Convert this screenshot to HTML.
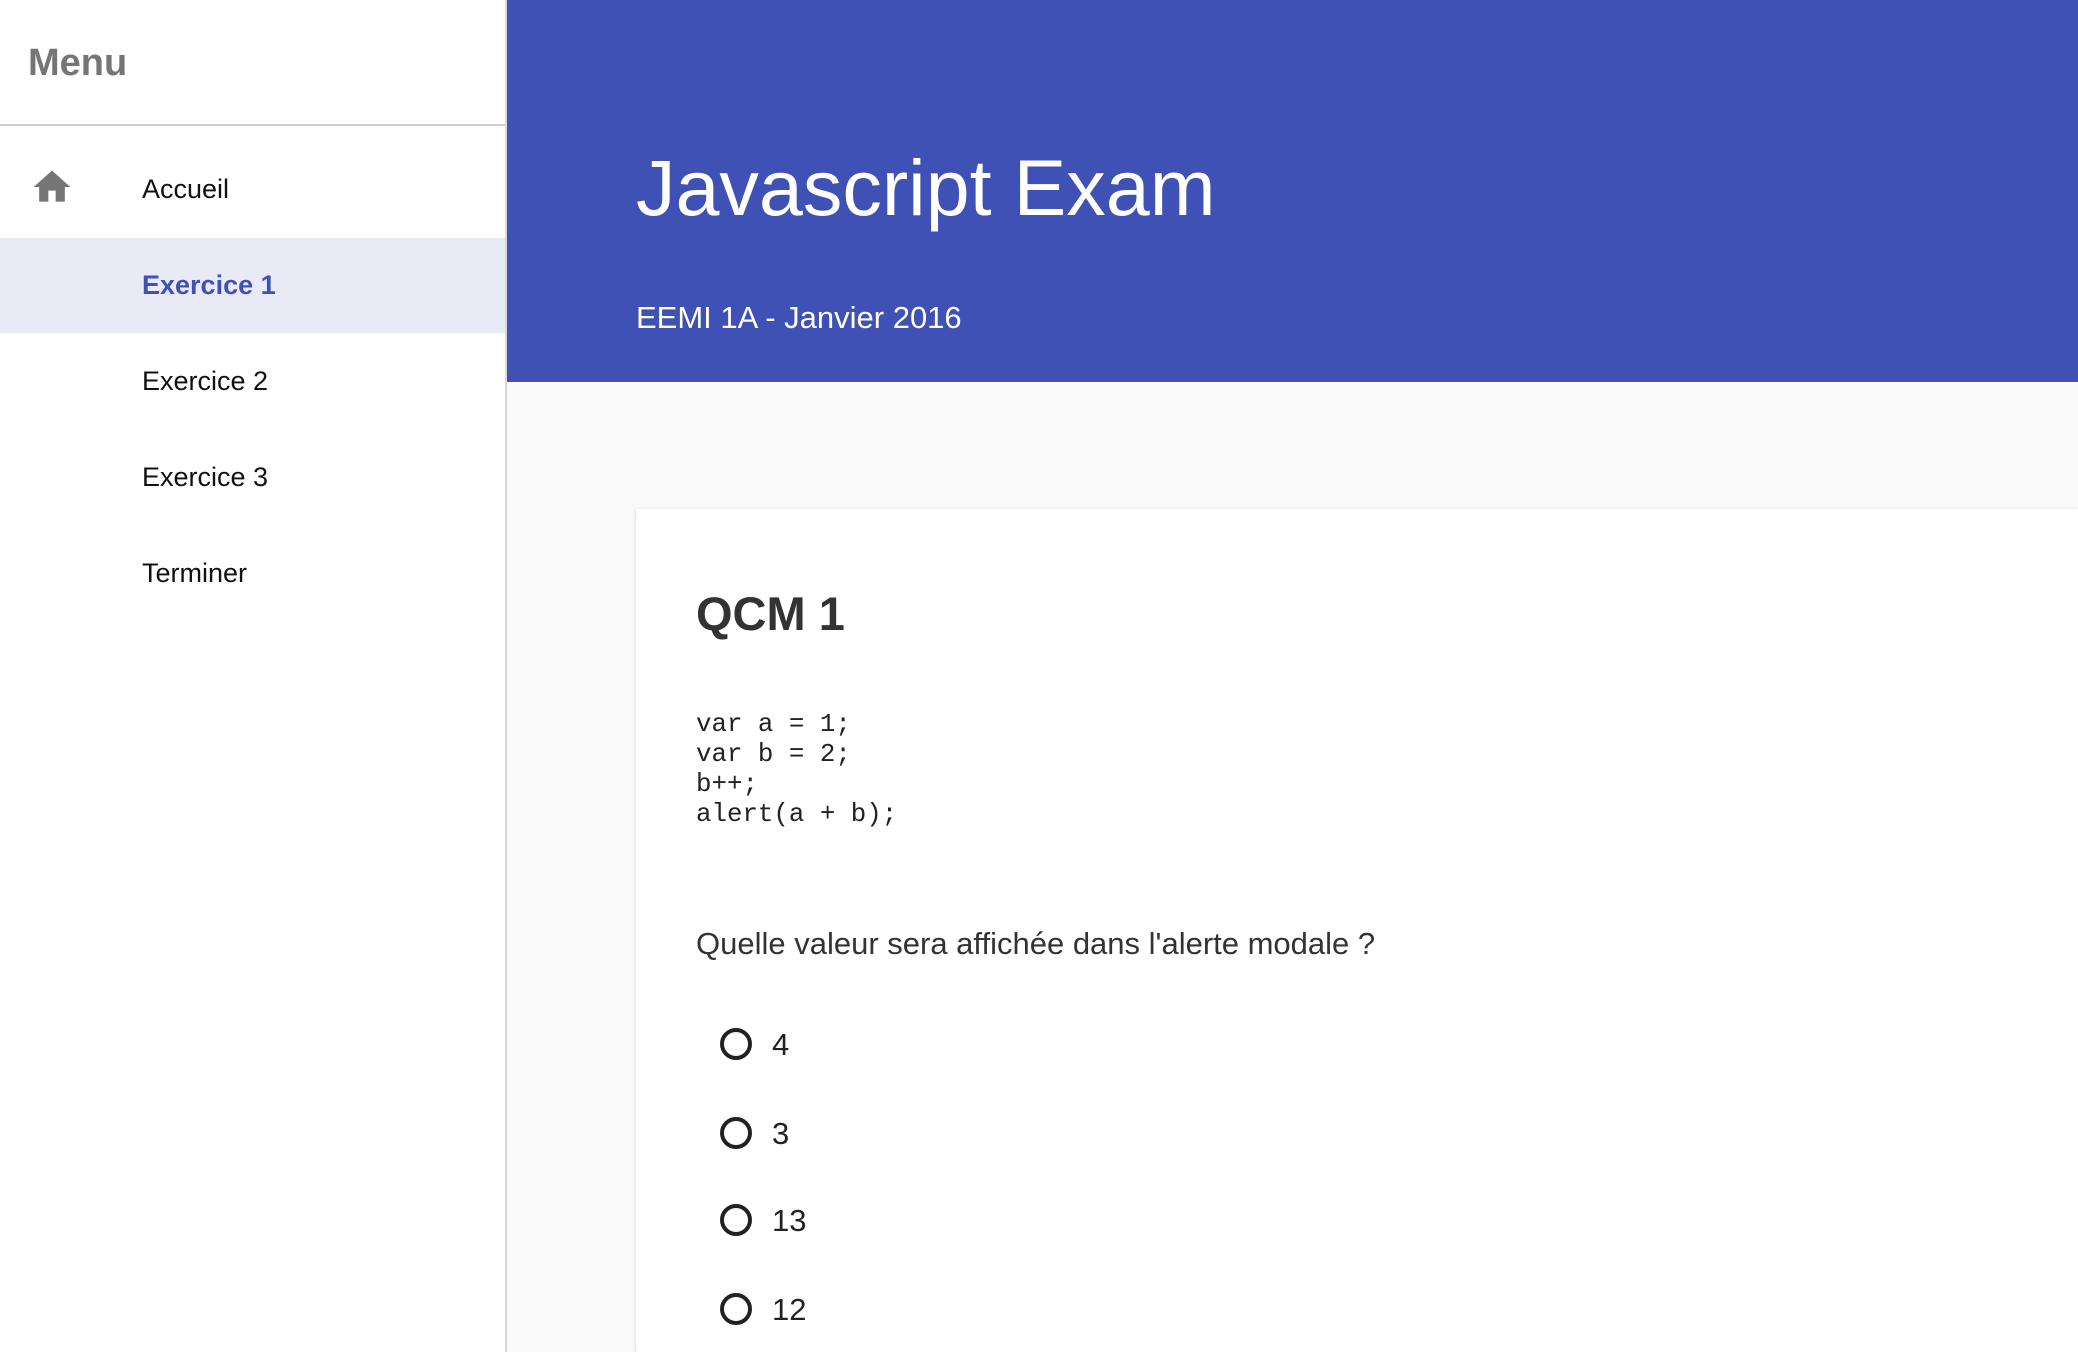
<!DOCTYPE html>
<html><head><meta charset="utf-8"><style>
*{margin:0;padding:0;box-sizing:border-box}
body{width:2078px;height:1352px;overflow:hidden;background:#fafafa;font-family:"Liberation Sans",Arial,sans-serif;position:relative}
.side{position:absolute;left:0;top:0;width:507px;height:1352px;background:#fff;border-right:2px solid #d9d9d9}
.menu{position:absolute;left:28px;top:42px;font-size:38px;font-weight:bold;color:#757575}
.div{position:absolute;left:0;top:124px;width:505px;height:2px;background:#cfcfcf}
.item{position:absolute;left:0;width:505px;height:95px;line-height:95px;padding-left:142px;font-size:27px;color:#111}
.item.act{background:#e8eaf6;color:#3f51b5;font-weight:bold}
.hdr{position:absolute;left:507px;top:0;right:0;height:382px;background:#3f51b5;color:#fff}
.hdr h1{position:absolute;left:129px;top:148px;font-size:79px;font-weight:normal;line-height:1}
.hdr p{position:absolute;left:129px;top:302px;font-size:31px;line-height:1}
.card{position:absolute;left:636px;top:509px;right:0;bottom:0;background:#fff;box-shadow:0 1px 4px rgba(0,0,0,.15)}
.q{position:absolute;left:60px;top:77px;font-size:47px;font-weight:bold;color:#333}
pre{position:absolute;left:60px;top:201px;font-family:"Liberation Mono",monospace;font-size:25.8px;line-height:30px;color:#222}
.qt{position:absolute;left:60px;top:417px;font-size:31px;color:#333}
.r{position:absolute;left:84px;width:32px;height:32px;border:4px solid #222;border-radius:50%}
.rl{position:absolute;left:136px;font-size:31px;color:#222}
</style></head><body>
<div class="side">
<div class="menu">Menu</div>
<div class="div"></div>
<svg style="position:absolute;left:30px;top:165px" width="44" height="44" viewBox="0 0 24 24"><path d="M10 20v-6h4v6h5v-8h3L12 3 2 12h3v8z" fill="#757575"/></svg>
<div class="item" style="top:142px">Accueil</div>
<div class="item act" style="top:238px">Exercice 1</div>
<div class="item" style="top:334px">Exercice 2</div>
<div class="item" style="top:430px">Exercice 3</div>
<div class="item" style="top:526px">Terminer</div>
</div>
<div class="hdr"><h1>Javascript Exam</h1><p>EEMI 1A - Janvier 2016</p></div>
<div class="card">
<div class="q">QCM 1</div>
<pre>var a = 1;
var b = 2;
b++;
alert(a + b);</pre>
<div class="qt">Quelle valeur sera affichée dans l'alerte modale ?</div>
<div class="r" style="top:519px"></div><div class="rl" style="top:518px">4</div>
<div class="r" style="top:608px"></div><div class="rl" style="top:607px">3</div>
<div class="r" style="top:695px"></div><div class="rl" style="top:694px">13</div>
<div class="r" style="top:784px"></div><div class="rl" style="top:783px">12</div>
</div>
</body></html>
